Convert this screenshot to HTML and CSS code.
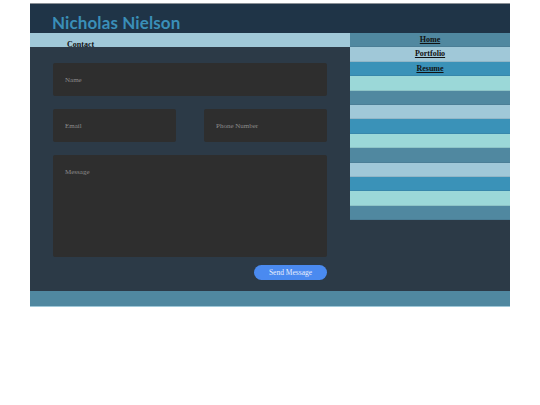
FILE: index.html
```html
<!DOCTYPE html>
<html>
<head>
<meta charset="utf-8">
<link rel="stylesheet" href="styles.css">
</head>
<body>
<div class="page">
  <header class="header"><h1 class="title">Nicholas Nielson</h1></header>
  <div class="layout">
    <div class="main">
      <nav class="subnav"><span class="subnav-item">Contact</span></nav>
      <form class="form">
        <div class="field full">Name</div>
        <div class="row">
          <div class="field half">Email</div>
          <div class="field half">Phone Number</div>
        </div>
        <div class="field message">Message</div>
        <div class="actions"><button type="button" class="send">Send Message</button></div>
      </form>
    </div>
    <aside class="side">
      <a class="stripe s1" href="#">Home</a>
      <a class="stripe s2" href="#">Portfolio</a>
      <a class="stripe s3" href="#">Resume</a>
      <div class="stripe s4"></div>
      <div class="stripe s1"></div>
      <div class="stripe s2"></div>
      <div class="stripe s3"></div>
      <div class="stripe s4"></div>
      <div class="stripe s1"></div>
      <div class="stripe s2"></div>
      <div class="stripe s3"></div>
      <div class="stripe s4"></div>
      <div class="stripe s1"></div>
    </aside>
  </div>
  <footer class="footer"></footer>
</div>
</body>
</html>
```
FILE: styles.css
```css
* { box-sizing: border-box; }
html, body { margin: 0; padding: 0; background: #fff; }
body { font-family: "Liberation Serif", serif; }
.page {
  width: 480px;
  margin: 3px auto 0;
  border-top: 1px solid #8a9096;
}
.header {
  background: #1f3447;
  height: 29px;
  padding: 10px 0 0 22px;
}
.title {
  margin: 0;
  font-family: "Lato", sans-serif;
  font-weight: 700;
  font-size: 17px;
  line-height: 18px;
  color: #3a8fb8;
  letter-spacing: 0.1px;
}
.layout {
  display: grid;
  grid-template-columns: 320px 160px;
  background: #2c3a47;
}
.main { height: 258px; }
.subnav {
  background: #a0c8d8;
  height: 14px;
  padding-left: 37px;
}
.subnav-item {
  font-weight: 700;
  font-size: 8px;
  line-height: 14px;
  color: #111;
}
.form {
  padding: 16px 23px 0 23px;
  display: flex;
  flex-direction: column;
  gap: 13px;
}
.row {
  display: flex;
  justify-content: space-between;
}
.field {
  background: #2e2e2e;
  border-radius: 2px;
  color: #8c8c8c;
  font-size: 7px;
  padding: 13px 12px;
  height: 33px;
}
.half { width: 123px; }
.full { width: 274px; }
.message { height: 102px; padding-top: 13px; }
.actions {
  display: flex;
  justify-content: flex-end;
  margin-top: -5px;
}
.send {
  width: 73px;
  height: 15px;
  border: none;
  border-radius: 8px;
  background: #4a8af0;
  color: #e8eefc;
  font-family: "Liberation Serif", serif;
  font-size: 7.5px;
  padding: 0;
}
.side {
  display: flex;
  flex-direction: column;
  align-self: start;
}
.stripe {
  display: block;
  height: 14.4px;
  text-align: center;
  font-weight: 700;
  font-size: 8px;
  line-height: 14px;
  color: #111;
  text-decoration: underline;
  border-bottom: 1px solid rgba(40, 60, 80, 0.12);
}
.s1 { background: #5088a0; }
.s2 { background: #a0c8d8; }
.s3 { background: #3a92b8; }
.s4 { background: #9bd8d8; }
.footer {
  background: #5088a0;
  height: 16px;
  border-bottom: 1px solid #a0c8d8;
}
```
